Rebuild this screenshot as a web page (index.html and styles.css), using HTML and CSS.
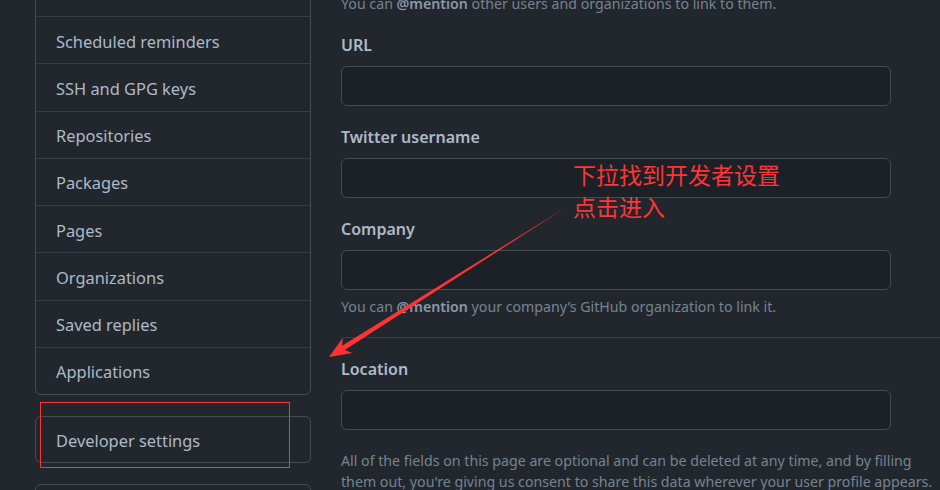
FILE: index.html
```html
<!DOCTYPE html>
<html lang="en">
<head>
<meta charset="utf-8">
<title>Settings</title>
<link rel="stylesheet" href="styles.css">
</head>
<body>
<div class="page">
  <aside class="side">
    <nav class="menu">
      <a class="item">Notifications</a>
      <a class="item">Scheduled reminders</a>
      <a class="item">SSH and GPG keys</a>
      <a class="item">Repositories</a>
      <a class="item">Packages</a>
      <a class="item">Pages</a>
      <a class="item">Organizations</a>
      <a class="item">Saved replies</a>
      <a class="item">Applications</a>
    </nav>
    <nav class="menu single">
      <a class="item">Developer settings</a>
    </nav>
    <nav class="menu single">
      <a class="item">Moderation settings</a>
    </nav>
  </aside>
  <main class="main">
    <p class="note">You can <b>@mention</b> other users and organizations to link to them.</p>
    <div class="group">
      <label class="label">URL</label>
      <div class="input"></div>
    </div>
    <div class="group">
      <label class="label">Twitter username</label>
      <div class="input"></div>
    </div>
    <div class="group last">
      <label class="label">Company</label>
      <div class="input"></div>
      <p class="note">You can <b>@mention</b> your company’s GitHub organization to link it.</p>
    </div>
    <hr class="divider">
    <div class="group last">
      <label class="label">Location</label>
      <div class="input"></div>
    </div>
    <p class="note para">All of the fields on this page are optional and can be deleted at any time, and by filling them out, you're giving us consent to share this data wherever your user profile appears.</p>
  </main>
</div>

<div class="callout">下拉找到开发者设置<br>点击进入</div>
<div class="highlight"></div>
<svg class="arrow" width="940" height="490" viewBox="0 0 940 490">
  <polygon points="565,208 344.7,350.0 352.4,352.9 329,357 342.8,337.7 342.1,345.8" fill="#f33"/>
</svg>
</body>
</html>
```

FILE: styles.css
```css
html, body {
  margin: 0;
  padding: 0;
}
body {
  width: 940px;
  height: 490px;
  overflow: hidden;
  background: #22272e;
  font-family: "Noto Sans", "Liberation Sans", sans-serif;
  color: #adbac7;
  position: relative;
}
.page {
  display: flex;
  align-items: flex-start;
  gap: 30px;
  padding-left: 35px;
  margin-top: -31.25px;
}
.side {
  width: 276px;
  flex: none;
  display: flex;
  flex-direction: column;
  gap: 21px;
}
.menu {
  border: 1px solid #444c56;
  border-radius: 6px;
  display: flex;
  flex-direction: column;
}
.item {
  height: 47.25px;
  flex: none;
  box-sizing: border-box;
  padding: 2px 20px 0;
  display: flex;
  align-items: center;
  font-size: 16.4px;
  color: #adbac7;
  border-top: 1px solid #373e47;
}
.item:first-child {
  height: 46.25px;
  border-top: none;
}
.menu.single .item {
  height: 45px;
}
.main {
  flex: none;
  width: 620px;
  margin-top: 23.75px;
}
.note {
  margin: 0;
  font-size: 14.2px;
  line-height: 21px;
  color: #768390;
}
.note b {
  font-weight: 600;
  color: #8b98a6;
}
.group {
  width: 550px;
  margin-bottom: 20px;
}
.main > .note:first-child {
  margin-bottom: 20.5px;
}
.label {
  display: block;
  font-size: 16px;
  font-weight: 600;
  line-height: 22px;
  margin-bottom: 10px;
  color: #adbac7;
}
.input {
  height: 40px;
  box-sizing: border-box;
  background: #1c2128;
  border: 1px solid #444c56;
  border-radius: 6px;
}
.group.last {
  margin-bottom: 0;
}
.group .note {
  margin-top: 5.5px;
}
.divider {
  border: 0;
  border-top: 1px solid #373e47;
  margin: 20px 0 20px;
  height: 0;
}
.para {
  width: 592px;
  margin-top: 20.5px;
}
.callout {
  position: absolute;
  left: 573px;
  top: 158px;
  font-family: "Noto Sans CJK SC", sans-serif;
  font-size: 23px;
  line-height: 32px;
  color: #ff3535;
}
.highlight {
  position: absolute;
  left: 40px;
  top: 402px;
  width: 248px;
  height: 64px;
  border: 1.5px solid #ff3535;
}
.arrow {
  position: absolute;
  left: 0;
  top: 0;
  pointer-events: none;
}
```
